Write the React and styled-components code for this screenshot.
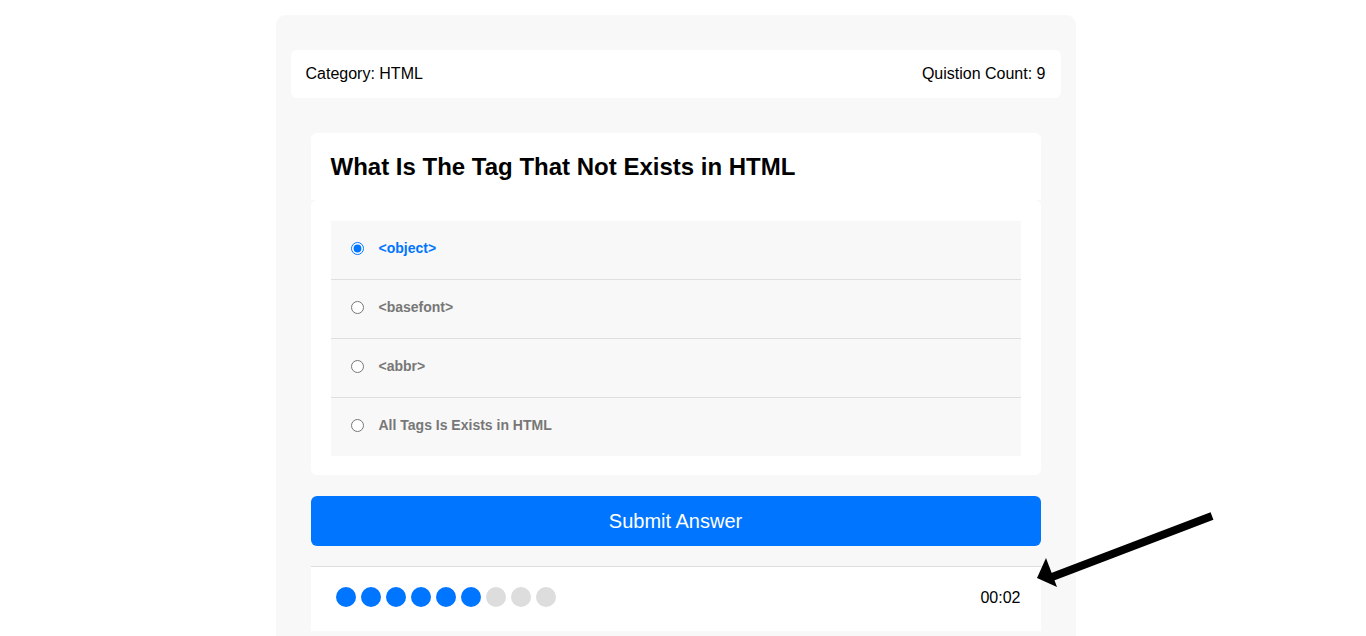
import React from "react";
import styled, { createGlobalStyle } from "styled-components";

const GlobalStyle = createGlobalStyle`
    * {
        box-sizing: border-box;
    }

    body {
        margin: 0;
        background: #fff;
        font-family: "Liberation Sans", Arial, sans-serif;
    }
`;

const answers = ["<object>", "<basefont>", "<abbr>", "All Tags Is Exists in HTML"];
const total = 9;
const done = 6;

const App = () => {
    return (
        <>
            <GlobalStyle />
            <Page>
                <QuizApp>
                    <InfoBar>
                        <span>Category: HTML</span>
                        <span>Quistion Count: 9</span>
                    </InfoBar>

                    <Quiz>
                        <Question>What Is The Tag That Not Exists in HTML</Question>
                        <Answers>
                            {answers.map((a, i) => (
                                <Answer key={i}>
                                    <input
                                        type="radio"
                                        name="question"
                                        id={`answer_${i}`}
                                        defaultChecked={i === 0}
                                    />
                                    <AnswerLabel htmlFor={`answer_${i}`} $active={i === 0}>
                                        {a}
                                    </AnswerLabel>
                                </Answer>
                            ))}
                        </Answers>
                    </Quiz>

                    <SubmitButton>Submit Answer</SubmitButton>

                    <Footer>
                        <Bullets>
                            {Array.from({ length: total }).map((_, i) => (
                                <Bullet key={i} $on={i < done} />
                            ))}
                        </Bullets>
                        <Countdown>00:02</Countdown>
                    </Footer>
                </QuizApp>
            </Page>

            <Pointer width="190" height="90" viewBox="0 0 190 90">
                <line x1="180" y1="16" x2="20" y2="77" stroke="#000" strokeWidth="8" />
                <polygon points="5,78 14,58 25,87" fill="#000" />
            </Pointer>
        </>
    );
};

const Page = styled.div`
    padding: 15px 15px 15px 0;
`;

const QuizApp = styled.div`
    width: 800px;
    min-height: 820px;
    margin: 0 auto;
    padding: 35px 15px 20px;
    background-color: #f8f8f8;
    border-radius: 10px;
`;

const InfoBar = styled.div`
    display: flex;
    justify-content: space-between;
    padding: 15px;
    background-color: #fff;
    border-radius: 6px;
    font-size: 16px;
    line-height: 18px;
    color: #000;
`;

const Quiz = styled.div`
    margin: 35px 20px 0;
`;

const Question = styled.h2`
    margin: 0;
    padding: 20px;
    background-color: #fff;
    border-radius: 6px 6px 0 0;
    font-size: 24px;
    line-height: 27px;
    font-weight: bold;
    color: #000;
`;

const Answers = styled.div`
    padding: 21px 20px 19px;
    background-color: #fff;
    border-radius: 6px;
`;

const Answer = styled.div`
    display: flex;
    align-items: center;
    height: 59px;
    padding: 0 20px 4px;
    background-color: #f8f8f8;
    border-bottom: 1px solid #dfdfdf;

    &:last-child {
        height: 58px;
        border-bottom: none;
    }

    input {
        width: 13px;
        height: 13px;
        margin: 0;
    }
`;

const AnswerLabel = styled.label`
    margin-left: 15px;
    font-size: 14px;
    font-weight: bold;
    color: ${(p) => (p.$active ? "#0075ff" : "#777")};
    cursor: pointer;
`;

const SubmitButton = styled.button`
    display: block;
    width: calc(100% - 40px);
    height: 50px;
    margin: 21px auto 0;
    border: none;
    border-radius: 6px;
    background-color: #0075ff;
    color: #fff;
    font-family: "Liberation Sans", Arial, sans-serif;
    font-size: 20px;
    cursor: pointer;
`;

const Footer = styled.div`
    display: flex;
    justify-content: space-between;
    align-items: center;
    margin: 20px 20px 0;
    padding: 20px 20px 24px 25px;
    background-color: #fff;
    border-top: 1px solid #ddd;
`;

const Bullets = styled.div`
    display: flex;
    gap: 5px;
`;

const Bullet = styled.span`
    width: 20px;
    height: 20px;
    border-radius: 50%;
    background-color: ${(p) => (p.$on ? "#0075ff" : "#ddd")};
`;

const Countdown = styled.div`
    padding-top: 2px;
    font-size: 16px;
    color: #000;
`;

const Pointer = styled.svg`
    position: absolute;
    left: 1032px;
    top: 500px;
    pointer-events: none;
`;

export default App;
